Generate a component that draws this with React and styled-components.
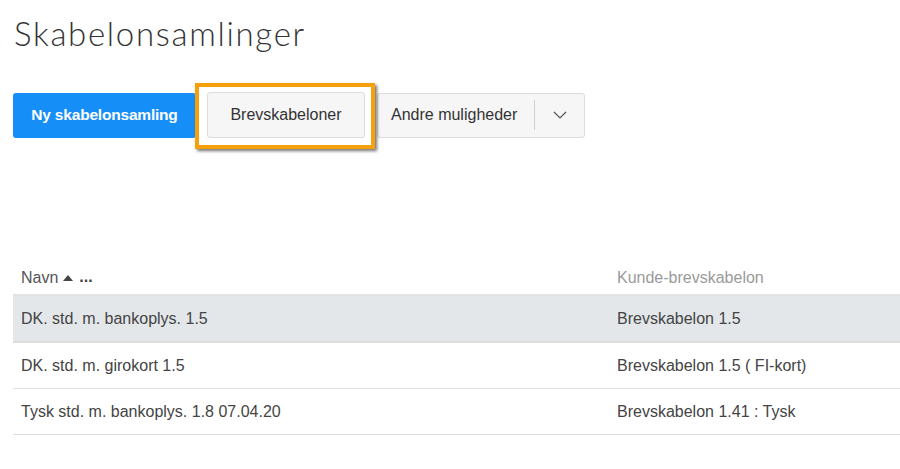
import React from 'react';
import styled, { createGlobalStyle } from 'styled-components';

const GlobalStyle = createGlobalStyle`
  html, body {
    margin: 0;
    padding: 0;
    background: #fff;
  }
  body {
    font-family: 'Liberation Sans', Arial, sans-serif;
  }
`

const rows = [
  { name: 'DK. std. m. bankoplys. 1.5', template: 'Brevskabelon 1.5', selected: true },
  { name: 'DK. std. m. girokort 1.5', template: 'Brevskabelon 1.5 ( FI-kort)' },
  { name: 'Tysk std. m. bankoplys. 1.8 07.04.20', template: 'Brevskabelon 1.41 : Tysk' },
];

function App() {
  return (
    <Page>
      <GlobalStyle />
      <Title>Skabelonsamlinger</Title>
      <Toolbar>
        <PrimaryButton>Ny skabelonsamling</PrimaryButton>
        <Highlight>
          <Button>Brevskabeloner</Button>
        </Highlight>
        <SplitButton>
          <SplitMain>Andre muligheder</SplitMain>
          <SplitToggle>
            <svg width="14" height="8" viewBox="0 0 14 8" fill="none">
              <polyline points="1,1 7,7 13,1" stroke="#555" strokeWidth="1.2" />
            </svg>
          </SplitToggle>
        </SplitButton>
      </Toolbar>
      <Table>
        <HeaderRow>
          <HeadCell dark>
            Navn
            <SortArrow>
              <svg width="10" height="7" viewBox="0 0 10 7">
                <polygon points="0,7 5,1 10,7" fill="#444" />
              </svg>
            </SortArrow>
            <Dots>...</Dots>
          </HeadCell>
          <HeadCell>Kunde-brevskabelon</HeadCell>
        </HeaderRow>
        {rows.map((row) => (
          <Row key={row.name} selected={row.selected}>
            <Cell>{row.name}</Cell>
            <Cell>{row.template}</Cell>
          </Row>
        ))}
      </Table>
    </Page>
  )
}

const Page = styled.div`
  padding: 13px 0 0 13px;
  font-family: 'Liberation Sans', Arial, sans-serif;
`
const Title = styled.h1`
  margin: 0;
  padding-left: 1px;
  font-family: 'Lato', sans-serif;
  font-weight: 300;
  font-size: 33px;
  line-height: 40px;
  letter-spacing: 1.7px;
  color: #333;
`
const Toolbar = styled.div`
  display: flex;
  align-items: center;
  gap: 11px;
  margin-top: 39px;
`
const PrimaryButton = styled.button`
  height: 45px;
  width: 183px;
  border: none;
  border-radius: 3px;
  background: #168ef8;
  color: #fff;
  font-family: 'Liberation Sans', Arial, sans-serif;
  font-weight: bold;
  font-size: 15.5px;
  letter-spacing: -0.2px;
  padding: 0;
`
const Highlight = styled.span`
  position: relative;
  display: inline-flex;
  margin-right: 1px;

  &::after {
    content: '';
    position: absolute;
    inset: -9px -10px -11px -12px;
    border: 4px solid #f6a10b;
    box-shadow: 2px 2px 3px rgba(0, 0, 0, 0.55);
    pointer-events: none;
  }
`
const Button = styled.button`
  height: 46px;
  width: 158px;
  border: 1px solid #dcdcdc;
  border-radius: 3px;
  background: #f6f6f6;
  color: #333;
  font-family: 'Liberation Sans', Arial, sans-serif;
  font-size: 16px;
  padding: 0;
`
const SplitButton = styled.div`
  display: flex;
  align-items: center;
  height: 45px;
  border: 1px solid #dcdcdc;
  border-radius: 3px;
  background: #f6f6f6;
  box-sizing: border-box;
`
const SplitMain = styled.span`
  padding: 0 17px 0 13px;
  color: #333;
  font-size: 16px;
  border-right: 1px solid #cfcfcf;
  line-height: 30px;
`
const SplitToggle = styled.span`
  display: flex;
  align-items: center;
  justify-content: center;
  width: 49px;
  height: 100%;
`
const Table = styled.div`
  margin-top: 123px;
  font-size: 16px;
`
const HeaderRow = styled.div`
  display: grid;
  grid-template-columns: 596px 1fr;
  height: 33px;
  align-items: center;
  border-bottom: 2px solid #e2e2e2;
`
const HeadCell = styled.div`
  display: flex;
  align-items: center;
  padding-left: 8px;
  color: ${(p) => (p.dark ? '#555' : '#9a9a9a')};
`
const SortArrow = styled.span`
  display: inline-flex;
  margin: 0 6px 0 5px;
`
const Dots = styled.span`
  font-weight: bold;
  color: #444;
  position: relative;
  top: -1px;
`
const Row = styled.div`
  display: grid;
  grid-template-columns: 596px 1fr;
  height: 45px;
  align-items: center;
  border-bottom: 1px solid #dedede;
  background: ${(p) => (p.selected ? '#e3e7ea' : '#fff')};
  border-bottom-width: ${(p) => (p.selected ? '2px' : '1px')};
`
const Cell = styled.div`
  padding-left: 8px;
  color: #444;
`

export default App;
